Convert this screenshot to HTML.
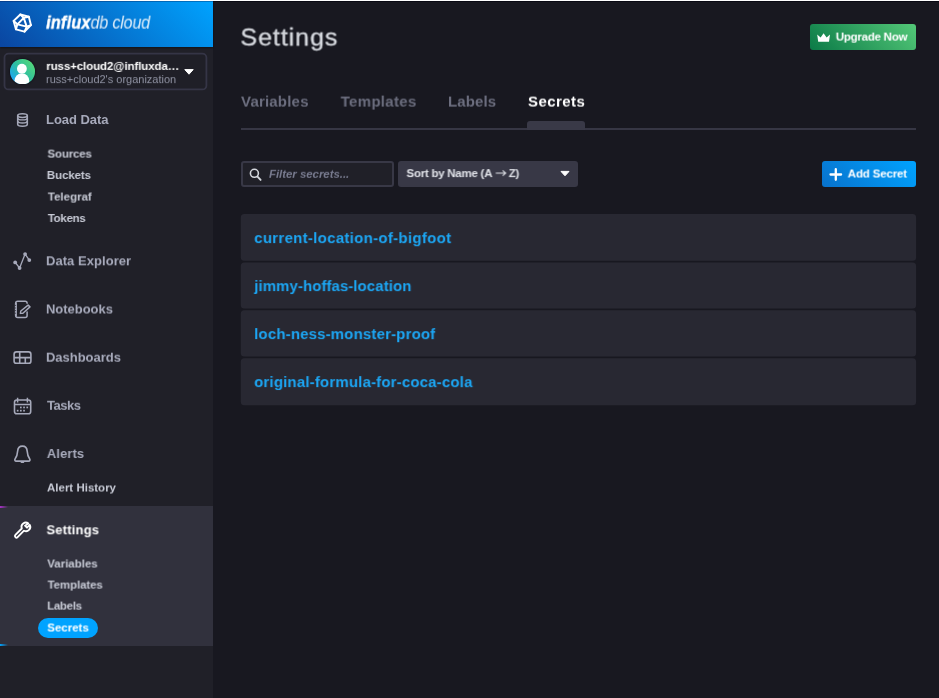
<!DOCTYPE html>
<html>
<head>
<meta charset="utf-8">
<title>Settings | InfluxDB Cloud</title>
<style>
*{box-sizing:border-box;margin:0;padding:0}
html,body{width:939px;height:698px;overflow:hidden;background:#181820}
body{font-family:"Liberation Sans",sans-serif;position:relative;color:#fff}
.abs{position:absolute}
.t{position:absolute;left:0;top:0;white-space:nowrap;line-height:1;transform-origin:0 0;will-change:transform}
#topline{left:0;top:0;width:939px;height:1px;background:#fff;z-index:10}
#side{left:0;top:1px;width:213px;height:697px;background:#202028}
#hdr{left:0;top:1px;width:213px;height:46px;background:linear-gradient(45deg,#0a45a0 0%,#00a3ff 100%);box-shadow:0 1px 2px rgba(0,0,0,.45)}
#userbox{left:3.7px;top:52.7px;width:203.6px;height:37.6px;border:2px solid #353546;border-radius:4.5px;background:#1f1f27}
#avatar{left:10.4px;top:59.3px;width:24.4px;height:24.6px;border-radius:50%;overflow:hidden;background:linear-gradient(50deg,#1fa8f4 12%,#2fbf9e 50%,#55d878 90%);box-shadow:0 0 1.5px 0.5px rgba(10,10,20,.8)}
.nav{font-weight:bold;font-size:13px;color:#a6a9ba}
.sub{font-weight:bold;font-size:11.5px;color:#c6c9d4}
#active{left:0;top:506px;width:213px;height:140px;background:#31313d}
#pill{left:38px;top:618px;width:60px;height:20px;border-radius:10px;background:#00a3ff}
.tab{font-weight:bold;font-size:15px;color:#6b6d7e}
.card{left:241px;width:675px;height:46px;background:#282832;border-radius:4px}
.sec{font-weight:bold;font-size:15px;color:#1ba6f4}
</style>
</head>
<body>
<div id="side" class="abs"></div>
<div id="hdr" class="abs"></div>
<div id="topline" class="abs"></div>
<div class="abs" style="left:213px;top:1px;width:726px;height:1px;background:rgba(0,0,12,.6);z-index:9"></div>
<div class="abs" style="left:0;top:1px;width:213px;height:1px;background:rgba(0,10,60,.3);z-index:9"></div>

<!-- logo -->
<svg class="abs" style="left:0;top:0" width="60" height="48" viewBox="0 0 60 48">
 <g fill="none" stroke="#fff" stroke-width="2.15" stroke-linejoin="round" stroke-linecap="round" transform="translate(22.3 23.1) scale(.915 .895) translate(-22.35 -23.05)">
  <polygon points="20.2,13.5 29.5,16.0 31.8,25.3 24.8,32.6 15.4,30.0 12.9,20.6"/>
  <polygon points="23.9,17.2 17.0,24.4 27.2,27.0"/>
  <path d="M20.2,13.5L23.9,17.2L29.5,16.0M12.9,20.6L17.0,24.4L15.4,30.0M31.8,25.3L27.2,27.0L24.8,32.6"/>
 </g>
</svg>
<div class="t" id="lg1" style="font-size:18px;font-style:italic;color:#fff;transform:translate(46.2px,13.6px) rotate(.02deg) scaleX(.892)"><b style="letter-spacing:.3px;-webkit-text-stroke:.45px #fff">influx</b><span style="opacity:.85;letter-spacing:-.2px">db cloud</span></div>

<!-- user box -->
<svg class="abs" style="left:0;top:50px" width="213" height="44" viewBox="0 50 213 44"><rect x="4.5" y="53.6" width="201.9" height="35.85" rx="4" fill="#1f1f27" stroke="#353546" stroke-width="1.8"/></svg>
<div id="avatar" class="abs">
 <svg width="24.4" height="24.6" viewBox="0 0 24.4 24.6" style="display:block"><circle cx="11.9" cy="9.7" r="4.9" fill="#fff"/><ellipse cx="11.9" cy="21.8" rx="7.4" ry="7.6" fill="#fff"/></svg>
</div>
<div class="t" id="u1" style="font-size:11.5px;font-weight:bold;color:#fff;letter-spacing:-0.09px;transform:translate(46.3px,60.9px) rotate(.02deg)">russ+cloud2@influxda…</div>
<div class="t" id="u2" style="font-size:11px;color:#8e91a1;letter-spacing:0px;transform:translate(46px,74.1px) rotate(.02deg)">russ+cloud2's organization</div>
<svg class="abs" style="left:184.2px;top:68.6px" width="10" height="6" viewBox="0 0 10 6"><path d="M0.8,0.6H9.2L5,5.2Z" fill="#fff" stroke="#fff" stroke-width="1" stroke-linejoin="round"/></svg>

<!-- nav -->
<div class="t nav" id="n1" style="letter-spacing:-0.05px;transform:translate(46px,113px) rotate(.02deg)">Load Data</div>
<div class="t sub" id="s1" style="letter-spacing:-0.15px;transform:translate(47.5px,148.6px) rotate(.02deg)">Sources</div>
<div class="t sub" id="s2" style="letter-spacing:-0.1px;transform:translate(46.8px,170px) rotate(.02deg)">Buckets</div>
<div class="t sub" id="s3" style="transform:translate(47.8px,191.55px) rotate(.02deg)">Telegraf</div>
<div class="t sub" id="s4" style="letter-spacing:-0.3px;transform:translate(47.8px,213px) rotate(.02deg)">Tokens</div>
<div class="t nav" id="n2" style="letter-spacing:0.05px;transform:translate(46px,254.3px) rotate(.02deg)">Data Explorer</div>
<div class="t nav" id="n3" style="letter-spacing:-0.03px;transform:translate(46px,302.5px) rotate(.02deg)">Notebooks</div>
<div class="t nav" id="n4" style="letter-spacing:-0.03px;transform:translate(46px,350.7px) rotate(.02deg)">Dashboards</div>
<div class="t nav" id="n5" style="letter-spacing:-0.45px;transform:translate(47px,398.8px) rotate(.02deg)">Tasks</div>
<div class="t nav" id="n6" style="letter-spacing:0.1px;transform:translate(46.8px,447px) rotate(.02deg)">Alerts</div>
<div class="t sub" id="s5" style="transform:translate(47px,482.5px) rotate(.02deg)">Alert History</div>

<div id="active" class="abs"></div>
<div class="abs" style="left:0;top:506px;width:8px;height:2px;background:linear-gradient(90deg,#a832c8,rgba(168,50,200,0))"></div>
<div class="abs" style="left:0;top:644px;width:8px;height:2px;background:linear-gradient(90deg,#00a3ff,rgba(0,163,255,0))"></div>
<div class="t nav" id="n7" style="color:#fff;letter-spacing:0.17px;transform:translate(46.5px,523.3px) rotate(.02deg)">Settings</div>
<div class="t sub" id="s6" style="letter-spacing:0px;transform:translate(47.3px,558.5px) rotate(.02deg)">Variables</div>
<div class="t sub" id="s7" style="letter-spacing:-0.1px;transform:translate(47.6px,579.6px) rotate(.02deg)">Templates</div>
<div class="t sub" id="s8" style="letter-spacing:-0.3px;transform:translate(47.2px,600.6px) rotate(.02deg)">Labels</div>
<div id="pill" class="abs"></div>
<div class="t sub" id="s9" style="color:#fff;transform:translate(47.3px,622.5px) rotate(.02deg)">Secrets</div>

<!-- nav icons -->
<svg class="abs" style="left:0;top:100px" width="46" height="400" viewBox="0 100 46 400" fill="none" stroke="#a6a9ba" stroke-width="1.5" stroke-linecap="round" stroke-linejoin="round">
 <!-- database -->
 <ellipse cx="22.5" cy="115.6" rx="4.8" ry="1.85" stroke-width="1.55"/>
 <path d="M17.7,115.6V124.3C17.7,125.4 19.85,126.25 22.5,126.25S27.3,125.4 27.3,124.3V115.6" stroke-width="1.55"/>
 <path d="M17.7,117.9C17.7,119 19.85,119.85 22.5,119.85S27.3,119 27.3,117.9M17.7,121.1C17.7,122.2 19.85,123.05 22.5,123.05S27.3,122.2 27.3,121.1" stroke-width="1.45"/>
 <!-- data explorer -->
 <path d="M15.2,262.4L19.6,268L25.1,254.1L29.3,260.1" stroke-width="1.3"/>
 <g fill="#a6a9ba" stroke="none"><circle cx="15.2" cy="262.4" r="1.9"/><circle cx="19.6" cy="268" r="1.9"/><circle cx="25.1" cy="254.1" r="1.9"/><circle cx="29.3" cy="260.1" r="1.9"/></g>
 <!-- notebook -->
 <path d="M27.1,303.3V303.2A2,2 0 0 0 25.1,301.2H17.7A2,2 0 0 0 15.7,303.2V315.6A2,2 0 0 0 17.7,317.6H25.1A2,2 0 0 0 27.1,315.6V311.9"/>
 <path d="M15.9,303.4V315.4" stroke-width="2"/>
 <path d="M14.7,305.4H16.1M14.7,308H16.1M14.7,310.6H16.1M14.7,313.2H16.1" stroke="#202028" stroke-width="0.7" stroke-linecap="butt"/>
 <path d="M20.4,313.4L20.8,311L28.1,305.1L30,306.9L22.9,313.3Z" stroke-width="1.45"/>
 <!-- dashboards -->
 <rect x="14.1" y="351.9" width="16.8" height="11.4" rx="2.4" stroke-width="1.6"/>
 <path d="M14.1,357.6H30.9M19.7,351.9V363.3M25.3,357.6V363.3" stroke-width="1.6" stroke-linecap="butt"/>
 <!-- tasks -->
 <rect x="14.5" y="400" width="16.2" height="13.7" rx="2.3" stroke-width="1.6"/>
 <path d="M14.5,404.5H30.7M17.6,397.7V402.5M27.4,397.7V402.5" stroke-width="1.5" stroke-linecap="butt"/>
 <g fill="#a6a9ba" stroke="none"><rect x="20" y="406.6" width="1.7" height="1.7"/><rect x="23.2" y="406.6" width="1.7" height="1.7"/><rect x="26.4" y="406.6" width="1.7" height="1.7"/><rect x="16.8" y="409.8" width="1.7" height="1.7"/><rect x="20" y="409.8" width="1.7" height="1.7"/><rect x="23.2" y="409.8" width="1.7" height="1.7"/></g>
 <!-- bell -->
 <path d="M22.4,446.1C19.3,446.1 17.8,448.6 17.6,451.3C17.4,454.6 16.7,456.8 15.2,458.8C14.4,459.9 14.9,461.1 16.3,461.1H28.5C29.9,461.1 30.4,459.9 29.6,458.8C28.1,456.8 27.4,454.6 27.2,451.3C27,448.6 25.5,446.1 22.4,446.1Z" stroke-width="1.65"/>
 <path d="M21.3,462.3H23.5" stroke-width="1.5"/>
</svg>
<!-- wrench -->
<svg class="abs" style="left:10px;top:518px" width="26" height="26" viewBox="10 518 26 26" fill="none" stroke="#fff" stroke-width="1.85" stroke-linecap="round" stroke-linejoin="round">
 <path transform="translate(.2 .3)" d="M28.2,523.2A4.3,4.3 0 0 0 21.6,528.2L15.2,534.6A1.5,1.5 0 0 0 17.4,536.8L23.8,530.4A4.3,4.3 0 0 0 29.6,524.6L26.8,527.4L24.8,525.4Z"/>
</svg>

<!-- main -->
<div class="t" id="title" style="font-size:24.6px;color:#d4d7dd;letter-spacing:0.9px;-webkit-text-stroke:0.35px #d4d7dd;transform:translate(240.4px,25.5px) rotate(.02deg) scaleX(1.02)">Settings</div>

<div class="abs" id="upg" style="left:810px;top:24px;width:106px;height:26px;border-radius:3px;background:linear-gradient(45deg,#0b7a47 0%,#54c878 100%)"></div>
<svg class="abs" style="left:816px;top:32px" width="16" height="12" viewBox="0 0 16 12"><path d="M1.2,2.6L4.6,5.6L7.6,1.2L10.6,5.6L14,2.6L13,9.8H2.2Z" fill="#fff"/></svg>
<div class="t" id="upgt" style="font-size:11.5px;font-weight:bold;color:#fff;letter-spacing:-0.25px;transform:translate(835.8px,31.6px) rotate(.02deg)">Upgrade Now</div>

<div class="t tab" id="t1" style="letter-spacing:0.2px;transform:translate(241px,93.6px) rotate(.02deg)">Variables</div>
<div class="t tab" id="t2" style="letter-spacing:0.3px;transform:translate(340.7px,93.6px) rotate(.02deg)">Templates</div>
<div class="t tab" id="t3" style="letter-spacing:0.12px;transform:translate(448px,93.6px) rotate(.02deg)">Labels</div>
<div class="t tab" id="t4" style="color:#fff;letter-spacing:0.45px;transform:translate(528px,93.6px) rotate(.02deg)">Secrets</div>
<div class="abs" style="left:241px;top:128px;width:675px;height:2px;background:#363644"></div>
<div class="abs" style="left:527px;top:121px;width:58px;height:9px;background:#393947;border-radius:3px 3px 0 0"></div>

<div class="abs" style="left:241px;top:161px;width:153px;height:26px;border:2px solid #383846;border-radius:3px;background:#202028"></div>
<svg class="abs" style="left:247px;top:166px" width="16" height="16" viewBox="0 0 16 16" fill="none" stroke="#d4d7dd" stroke-width="1.6" stroke-linecap="round"><circle cx="7.4" cy="7.3" r="4"/><path d="M10.5,10.6L13.6,13.9" stroke-width="1.9"/></svg>
<div class="t" id="ph" style="font-size:11.5px;font-style:italic;font-weight:bold;color:#777a8e;letter-spacing:-0.06px;transform:translate(269px,168.8px) rotate(.02deg)">Filter secrets...</div>

<div class="abs" style="left:398px;top:161px;width:180px;height:26px;border-radius:3px;background:#383846"></div>
<div class="t" id="sort" style="font-size:11.5px;font-weight:bold;color:#e0e2e8;letter-spacing:-0.25px;transform:translate(406.5px,168.1px) rotate(.02deg)">Sort by Name (A<svg width="11" height="8" viewBox="0 0 11 8" style="display:inline-block;margin:0 2.7px 0 2.9px;vertical-align:0"><path d="M0.3,4H10M7.2,1.4L10.2,4L7.2,6.6" fill="none" stroke="#e0e2e8" stroke-width="1.1"/></svg>Z)</div>
<svg class="abs" style="left:559px;top:170px" width="12" height="8" viewBox="0 0 12 8"><path d="M2,1.4H10L6,5.8Z" fill="#fff" stroke="#fff" stroke-width="1" stroke-linejoin="round"/></svg>

<div class="abs" style="left:822px;top:161px;width:94px;height:26px;border-radius:3px;background:linear-gradient(45deg,#0872cc 0%,#00a3ff 100%)"></div>
<svg class="abs" style="left:828px;top:167px" width="16" height="16" viewBox="0 0 16 16"><path d="M2.5,7.5H13.1M7.8,2.2V12.8" stroke="#fff" stroke-width="2.3" stroke-linecap="round"/></svg>
<div class="t" id="addt" style="font-size:11.5px;font-weight:bold;color:#fff;letter-spacing:-0.15px;transform:translate(847.7px,168.5px) rotate(.02deg)">Add Secret</div>

<svg class="abs" style="left:240px;top:212px" width="678" height="196" viewBox="240 212 678 196"><g fill="#282832">
<rect x="240.8" y="213.9" width="675.3" height="46.8" rx="3.5"/>
<rect x="240.8" y="262.4" width="675.3" height="46.0" rx="3.5"/>
<rect x="240.8" y="310.2" width="675.3" height="46.4" rx="3.5"/>
<rect x="240.8" y="358.3" width="675.3" height="46.9" rx="3.5"/>
</g></svg>
<div class="t sec" id="c1" style="letter-spacing:0.3px;transform:translate(254.2px,230.1px) rotate(.02deg)">current-location-of-bigfoot</div>
<div class="t sec" id="c2" style="letter-spacing:0.06px;transform:translate(254.3px,278.1px) rotate(.02deg)">jimmy-hoffas-location</div>
<div class="t sec" id="c3" style="letter-spacing:0.16px;transform:translate(254.2px,326.1px) rotate(.02deg)">loch-ness-monster-proof</div>
<div class="t sec" id="c4" style="letter-spacing:0.17px;transform:translate(254.2px,374.1px) rotate(.02deg)">original-formula-for-coca-cola</div>
</body>
</html>
